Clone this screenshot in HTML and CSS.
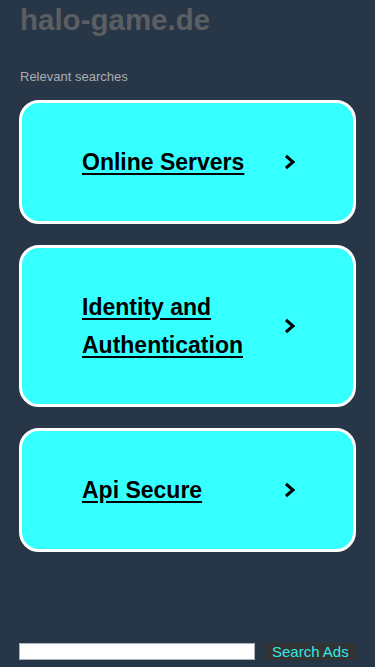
FILE: index.html
```html
<!DOCTYPE html>
<html lang="en">
<head>
    <meta charset="UTF-8">
    <meta name="viewport" content="width=device-width, initial-scale=1.0">
    <title>halo-game.de</title>
    <link rel="stylesheet" href="styles.css">
</head>
<body>
    <div class="page">
        <h1 class="site-title">halo-game.de</h1>
        <p class="label">Relevant searches</p>

        <!-- Suchbegriffe -->
        <ul class="links">
            <li>
                <a class="card" href="#">
                    <span class="card-text">Online Servers</span>
                    <svg class="chevron" width="14" height="18" viewBox="0 0 14 18"><polyline points="3,3 10,9 3,15" /></svg>
                </a>
            </li>
            <li>
                <a class="card" href="#">
                    <span class="card-text">Identity and Authentication</span>
                    <svg class="chevron" width="14" height="18" viewBox="0 0 14 18"><polyline points="3,3 10,9 3,15" /></svg>
                </a>
            </li>
            <li>
                <a class="card" href="#">
                    <span class="card-text">Api Secure</span>
                    <svg class="chevron" width="14" height="18" viewBox="0 0 14 18"><polyline points="3,3 10,9 3,15" /></svg>
                </a>
            </li>
        </ul>

        <!-- Suche -->
        <form class="search" onsubmit="return false">
            <input class="search-input" type="text">
            <button class="search-button" type="submit">Search Ads</button>
        </form>
    </div>
</body>
</html>
```

FILE: styles.css
```css
body {
    margin: 0;
    background: #283747;
    font-family: "Liberation Sans", Arial, sans-serif;
}

.page {
    display: flex;
    flex-direction: column;
    min-height: 667px;
    box-sizing: border-box;
    padding: 0 19px 7px 19px;
}

.site-title {
    margin: 0;
    padding-left: 1px;
    font-size: 29.5px;
    line-height: 40px;
    font-weight: bold;
    color: #5b5e62;
}

.label {
    margin: 29px 0 0 0;
    padding-left: 1px;
    font-size: 13px;
    line-height: 16px;
    color: #a9adb2;
}

.links {
    list-style: none;
    margin: 15px 0 0 0;
    padding: 0;
    display: flex;
    flex-direction: column;
    gap: 21px;
}

.card {
    display: flex;
    align-items: center;
    padding: 40px 0 40px 60px;
    background: #35ffff;
    border: 3px solid #fff;
    border-radius: 20px;
    color: #000;
    text-decoration: none;
}

.card-text {
    flex: 0 0 196px;
    font-size: 23px;
    line-height: 38px;
    font-weight: bold;
    text-decoration: underline;
    text-underline-offset: 3px;
}

.chevron {
    margin-left: 5px;
}

.chevron polyline {
    fill: none;
    stroke: #000;
    stroke-width: 3;
}

.search {
    margin-top: auto;
    display: flex;
    align-items: center;
    gap: 10px;
    margin-right: -1px;
}

.search-input {
    width: 236px;
    height: 17px;
    margin: 0;
    padding: 0;
    box-sizing: border-box;
    border: 1px solid #aab2bd;
    background: #fff;
}

.search-button {
    height: 17px;
    margin: 0;
    padding: 0 7px;
    border: none;
    background: #333;
    color: #35e8e8;
    font-family: "Liberation Sans", Arial, sans-serif;
    font-size: 15px;
    line-height: 17px;
}
```
